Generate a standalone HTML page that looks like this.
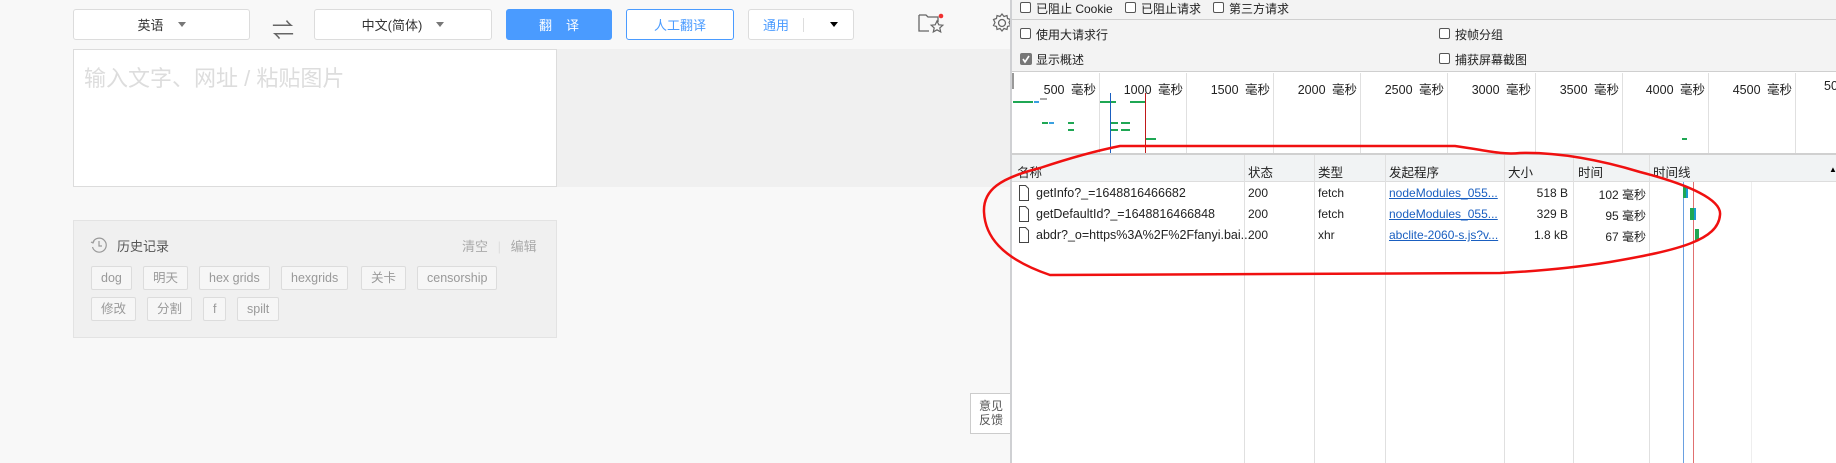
<!DOCTYPE html>
<html><head><meta charset="utf-8"><style>
*{box-sizing:border-box;margin:0;padding:0}
body{width:1836px;height:463px;overflow:hidden;background:#f8f8f8;font-family:"Liberation Sans","Noto Sans CJK SC",sans-serif;position:relative}
.a{position:absolute}
.btn{position:absolute;top:9px;height:31px;border:1px solid #dcdcdc;border-radius:3px;background:#fff;font-size:13px;color:#333;display:flex;align-items:center;justify-content:center}
.tri{display:inline-block;width:0;height:0;border-left:4px solid transparent;border-right:4px solid transparent;border-top:5px solid #777;margin-left:14px}
.tag{position:absolute;height:24px;border:1px solid #dcdcdc;border-radius:2px;background:#f6f6f6;color:#999;font-size:12.5px;line-height:22px;padding:0 9px}
.dt{font-size:12px;color:#222;font-family:"Liberation Sans","Noto Sans CJK SC",sans-serif}
.cb{position:absolute;width:11px;height:11px;border:1px solid #555;border-radius:2px;background:#fff}
.vl{position:absolute;width:1px;background:#e0e0e0}
.g{position:absolute;height:2px;background:#1fa754}
.tk{position:absolute;top:79px;width:80px;text-align:right;font-size:12.5px;color:#222;word-spacing:3px;white-space:nowrap}
</style></head><body>
<div class="btn" style="left:73px;width:177px">英语<span class="tri"></span></div>
<div class="a" style="left:272px;top:13px;font-size:22px;color:#666">⇌</div>
<div class="btn" style="left:314px;width:178px">中文(简体)<span class="tri"></span></div>
<div class="btn" style="left:506px;width:106px;background:#4a9bff;border-color:#4a9bff;color:#fff;letter-spacing:14px;padding-left:14px">翻译</div>
<div class="btn" style="left:626px;width:108px;border-color:#4a9bff;color:#4a9bff">人工翻译</div>
<div class="btn" style="left:748px;width:106px;justify-content:flex-start;padding-left:14px;color:#4a9bff">通用<span style="width:1px;height:14px;background:#ddd;margin-left:14px"></span><span style="margin-left:26px;width:0;height:0;border-left:4px solid transparent;border-right:4px solid transparent;border-top:5px solid #000"></span></div>
<svg class="a" style="left:918px;top:12px" width="30" height="22" viewBox="0 0 30 22"><path d="M1 3h7l2 2h10v5M1 3v16h10" fill="none" stroke="#666" stroke-width="1.3"/><path d="M19 9l1.8 3.8 4 .4-3 2.7.9 4-3.7-2.1-3.7 2.1.9-4-3-2.7 4-.4z" fill="none" stroke="#666" stroke-width="1.2"/><circle cx="23" cy="4" r="2.3" fill="#f03030"/></svg>
<svg class="a" style="left:992px;top:12px" width="20" height="22" viewBox="0 0 20 22"><circle cx="10" cy="11" r="3.5" fill="none" stroke="#666" stroke-width="1.3"/><path d="M10 2l2 2.5 3-1 .5 3 3 1-1.5 3 1.5 3-3 1-.5 3-3-1-2 2.5-2-2.5-3 1-.5-3-3-1 1.5-3-1.5-3 3-1 .5-3 3 1z" fill="none" stroke="#666" stroke-width="1.2"/></svg>
<div class="a" style="left:556px;top:49px;width:455px;height:138px;background:#f0f0f0"></div>
<div class="a" style="left:73px;top:49px;width:484px;height:138px;background:#fff;border:1px solid #dcdcdc"></div>
<div class="a" style="left:84px;top:61px;font-size:22px;color:#ddd">输入文字、网址 / 粘贴图片</div>
<div class="a" style="left:73px;top:220px;width:484px;height:118px;background:#f0f0f0;border:1px solid #e3e3e3"></div>
<svg class="a" style="left:90px;top:236px" width="18" height="18" viewBox="0 0 18 18"><path d="M3 6A7 7 0 1 1 2.5 11" fill="none" stroke="#999" stroke-width="1.2"/><path d="M1 6l2 1 1-2M9 5v5h3" fill="none" stroke="#999" stroke-width="1.2"/></svg>
<div class="a" style="left:117px;top:236px;font-size:13px;color:#555">历史记录</div>
<div class="a" style="left:462px;top:236px;font-size:13px;color:#aaa">清空 <span style="color:#ddd;margin:0 6px">|</span> 编辑</div>
<div class="tag" style="left:91px;top:266px">dog</div>
<div class="tag" style="left:143px;top:266px">明天</div>
<div class="tag" style="left:199px;top:266px">hex grids</div>
<div class="tag" style="left:281px;top:266px">hexgrids</div>
<div class="tag" style="left:361px;top:266px">关卡</div>
<div class="tag" style="left:417px;top:266px">censorship</div>
<div class="tag" style="left:91px;top:297px">修改</div>
<div class="tag" style="left:147px;top:297px">分割</div>
<div class="tag" style="left:203px;top:297px">f</div>
<div class="tag" style="left:237px;top:297px">spilt</div>
<div class="a" style="left:970px;top:393px;width:42px;height:41px;border:1px solid #ccc;background:#fff;font-size:12px;color:#555;line-height:14px;padding:5px 0 0 8px">意见<br>反馈</div>
<!-- devtools -->
<div class="a" style="left:1010px;top:0;width:826px;height:463px;background:#fff;border-left:2px solid #cfd0d3"></div>
<div class="a" style="left:1012px;top:0;width:824px;height:72px;background:#f3f3f3;border-bottom:1px solid #cfcfcf"></div>
<div class="a" style="left:1012px;top:19px;width:824px;height:1px;background:#cfcfcf"></div>
<div class="cb" style="left:1020px;top:2px"></div><div class="a dt" style="left:1036px;top:0">已阻止 Cookie</div>
<div class="cb" style="left:1125px;top:2px"></div><div class="a dt" style="left:1141px;top:0">已阻止请求</div>
<div class="cb" style="left:1213px;top:2px"></div><div class="a dt" style="left:1229px;top:0">第三方请求</div>
<div class="cb" style="left:1020px;top:28px"></div><div class="a dt" style="left:1036px;top:26px">使用大请求行</div>
<svg class="a" style="left:1020px;top:53px" width="12" height="12" viewBox="0 0 12 12"><rect x="0" y="0" width="12" height="12" rx="2" fill="#777"/><path d="M3 6l2 3 4-6" fill="none" stroke="#fff" stroke-width="1.6"/></svg><div class="a dt" style="left:1036px;top:51px">显示概述</div>
<div class="cb" style="left:1439px;top:28px"></div><div class="a dt" style="left:1455px;top:26px">按帧分组</div>
<div class="cb" style="left:1439px;top:53px"></div><div class="a dt" style="left:1455px;top:51px">捕获屏幕截图</div>
<!-- overview -->
<div class="a" style="left:1012px;top:73px;width:2px;height:16px;background:#999"></div>
<div class="vl" style="left:1099px;top:73px;height:80px"></div>
<div class="vl" style="left:1186px;top:73px;height:80px"></div>
<div class="vl" style="left:1273px;top:73px;height:80px"></div>
<div class="vl" style="left:1360px;top:73px;height:80px"></div>
<div class="vl" style="left:1447px;top:73px;height:80px"></div>
<div class="vl" style="left:1535px;top:73px;height:80px"></div>
<div class="vl" style="left:1622px;top:73px;height:80px"></div>
<div class="vl" style="left:1708px;top:73px;height:80px"></div>
<div class="vl" style="left:1795px;top:73px;height:80px"></div>
<div class="tk" style="left:1016px">500 毫秒</div>
<div class="tk" style="left:1103px">1000 毫秒</div>
<div class="tk" style="left:1190px">1500 毫秒</div>
<div class="tk" style="left:1277px">2000 毫秒</div>
<div class="tk" style="left:1364px">2500 毫秒</div>
<div class="tk" style="left:1451px">3000 毫秒</div>
<div class="tk" style="left:1539px">3500 毫秒</div>
<div class="tk" style="left:1625px">4000 毫秒</div>
<div class="tk" style="left:1712px">4500 毫秒</div>
<div class="a" style="left:1824px;top:79px;font-size:12.5px;color:#222">50</div>
<div class="g" style="left:1013px;top:101px;width:20px"></div><div class="a" style="left:1034px;top:101px;width:5px;height:2px;background:#3aa0e0"></div>
<div class="a" style="left:1040px;top:98px;width:7px;height:2px;background:#aaa"></div>
<div class="g" style="left:1100px;top:101px;width:16px"></div><div class="g" style="left:1130px;top:101px;width:15px"></div>
<div class="g" style="left:1042px;top:122px;width:6px"></div><div class="a" style="left:1049px;top:122px;width:5px;height:2px;background:#3aa0e0"></div>
<div class="g" style="left:1068px;top:122px;width:6px"></div><div class="g" style="left:1111px;top:122px;width:7px"></div><div class="g" style="left:1121px;top:122px;width:9px"></div>
<div class="g" style="left:1068px;top:129px;width:6px"></div><div class="g" style="left:1111px;top:129px;width:7px"></div><div class="g" style="left:1121px;top:129px;width:9px"></div>
<div class="g" style="left:1146px;top:138px;width:10px"></div><div class="g" style="left:1682px;top:138px;width:5px"></div>
<div class="a" style="left:1110px;top:93px;width:1px;height:60px;background:#1a5fc0"></div>
<div class="a" style="left:1145px;top:93px;width:1px;height:60px;background:#c01818"></div>
<div class="a" style="left:1012px;top:153px;width:824px;height:2px;background:#d0d0d0"></div>
<!-- table -->
<div class="a" style="left:1012px;top:155px;width:824px;height:27px;background:#f1f3f4;border-bottom:1px solid #ddd"></div>
<div class="vl" style="left:1244px;top:155px;height:308px"></div>
<div class="vl" style="left:1314px;top:155px;height:308px"></div>
<div class="vl" style="left:1385px;top:155px;height:308px"></div>
<div class="vl" style="left:1504px;top:155px;height:308px"></div>
<div class="vl" style="left:1573px;top:155px;height:308px"></div>
<div class="vl" style="left:1649px;top:155px;height:308px"></div>
<div class="vl" style="left:1751px;top:182px;height:281px;background:#eee"></div>
<div class="a dt" style="left:1017px;top:162px;font-size:12.5px">名称</div>
<div class="a dt" style="left:1248px;top:162px;font-size:12.5px">状态</div>
<div class="a dt" style="left:1318px;top:162px;font-size:12.5px">类型</div>
<div class="a dt" style="left:1389px;top:162px;font-size:12.5px">发起程序</div>
<div class="a dt" style="left:1508px;top:162px;font-size:12.5px">大小</div>
<div class="a dt" style="left:1578px;top:162px;font-size:12.5px">时间</div>
<div class="a dt" style="left:1653px;top:162px;font-size:12.5px">时间线</div>
<div class="a" style="left:1829px;top:165px;font-size:8px">▲</div>
<svg class="a" style="left:1019px;top:185px" width="10" height="58" viewBox="0 0 10 58"><g fill="#fff" stroke="#444"><path d="M.5 .5h6l3 3v12h-9z"/><path d="M.5 21.5h6l3 3v12h-9z"/><path d="M.5 42.5h6l3 3v12h-9z"/></g></svg>
<div class="a dt" style="left:1036px;top:186px;font-size:12.5px">getInfo?_=1648816466682</div>
<div class="a dt" style="left:1036px;top:207px;font-size:12.5px">getDefaultId?_=1648816466848</div>
<div class="a dt" style="left:1036px;top:228px;font-size:12.5px">abdr?_o=https%3A%2F%2Ffanyi.bai...</div>
<div class="a dt" style="left:1248px;top:186px">200</div><div class="a dt" style="left:1248px;top:207px">200</div><div class="a dt" style="left:1248px;top:228px">200</div>
<div class="a dt" style="left:1318px;top:186px">fetch</div><div class="a dt" style="left:1318px;top:207px">fetch</div><div class="a dt" style="left:1318px;top:228px">xhr</div>
<div class="a dt" style="left:1389px;top:186px;color:#1a5fc0;text-decoration:underline">nodeModules_055...</div>
<div class="a dt" style="left:1389px;top:207px;color:#1a5fc0;text-decoration:underline">nodeModules_055...</div>
<div class="a dt" style="left:1389px;top:228px;color:#1a5fc0;text-decoration:underline">abclite-2060-s.js?v...</div>
<div class="a dt" style="left:1504px;top:186px;width:64px;text-align:right">518 B</div>
<div class="a dt" style="left:1504px;top:207px;width:64px;text-align:right">329 B</div>
<div class="a dt" style="left:1504px;top:228px;width:64px;text-align:right">1.8 kB</div>
<div class="a dt" style="left:1573px;top:186px;width:73px;text-align:right">102 毫秒</div>
<div class="a dt" style="left:1573px;top:207px;width:73px;text-align:right">95 毫秒</div>
<div class="a dt" style="left:1573px;top:228px;width:73px;text-align:right">67 毫秒</div>
<div class="a" style="left:1683px;top:182px;width:1px;height:281px;background:#6aa0e0"></div>
<div class="a" style="left:1693px;top:182px;width:1px;height:281px;background:#e07070"></div>
<div class="a" style="left:1683px;top:186px;width:4px;height:12px;background:#1fa754"></div><div class="a" style="left:1686px;top:186px;width:2px;height:12px;background:#1a9ad0"></div>
<div class="a" style="left:1690px;top:208px;width:4px;height:12px;background:#1fa754"></div><div class="a" style="left:1694px;top:208px;width:2px;height:12px;background:#1a9ad0"></div>
<div class="a" style="left:1695px;top:229px;width:4px;height:12px;background:#1fa754"></div>
<svg class="a" style="left:0;top:0" width="1836" height="463"><path d="M1040 168C1070 158 1100 150 1120 146L1455 146C1485 150 1500 155 1520 153C1560 152 1600 160 1640 172C1690 185 1722 200 1720 215C1718 240 1680 250 1610 262C1560 270 1520 272 1500 273L1050 275C1000 258 985 235 984 212C983 190 1000 178 1040 168" fill="none" stroke="#f01010" stroke-width="2.5"/></svg>
</body></html>
